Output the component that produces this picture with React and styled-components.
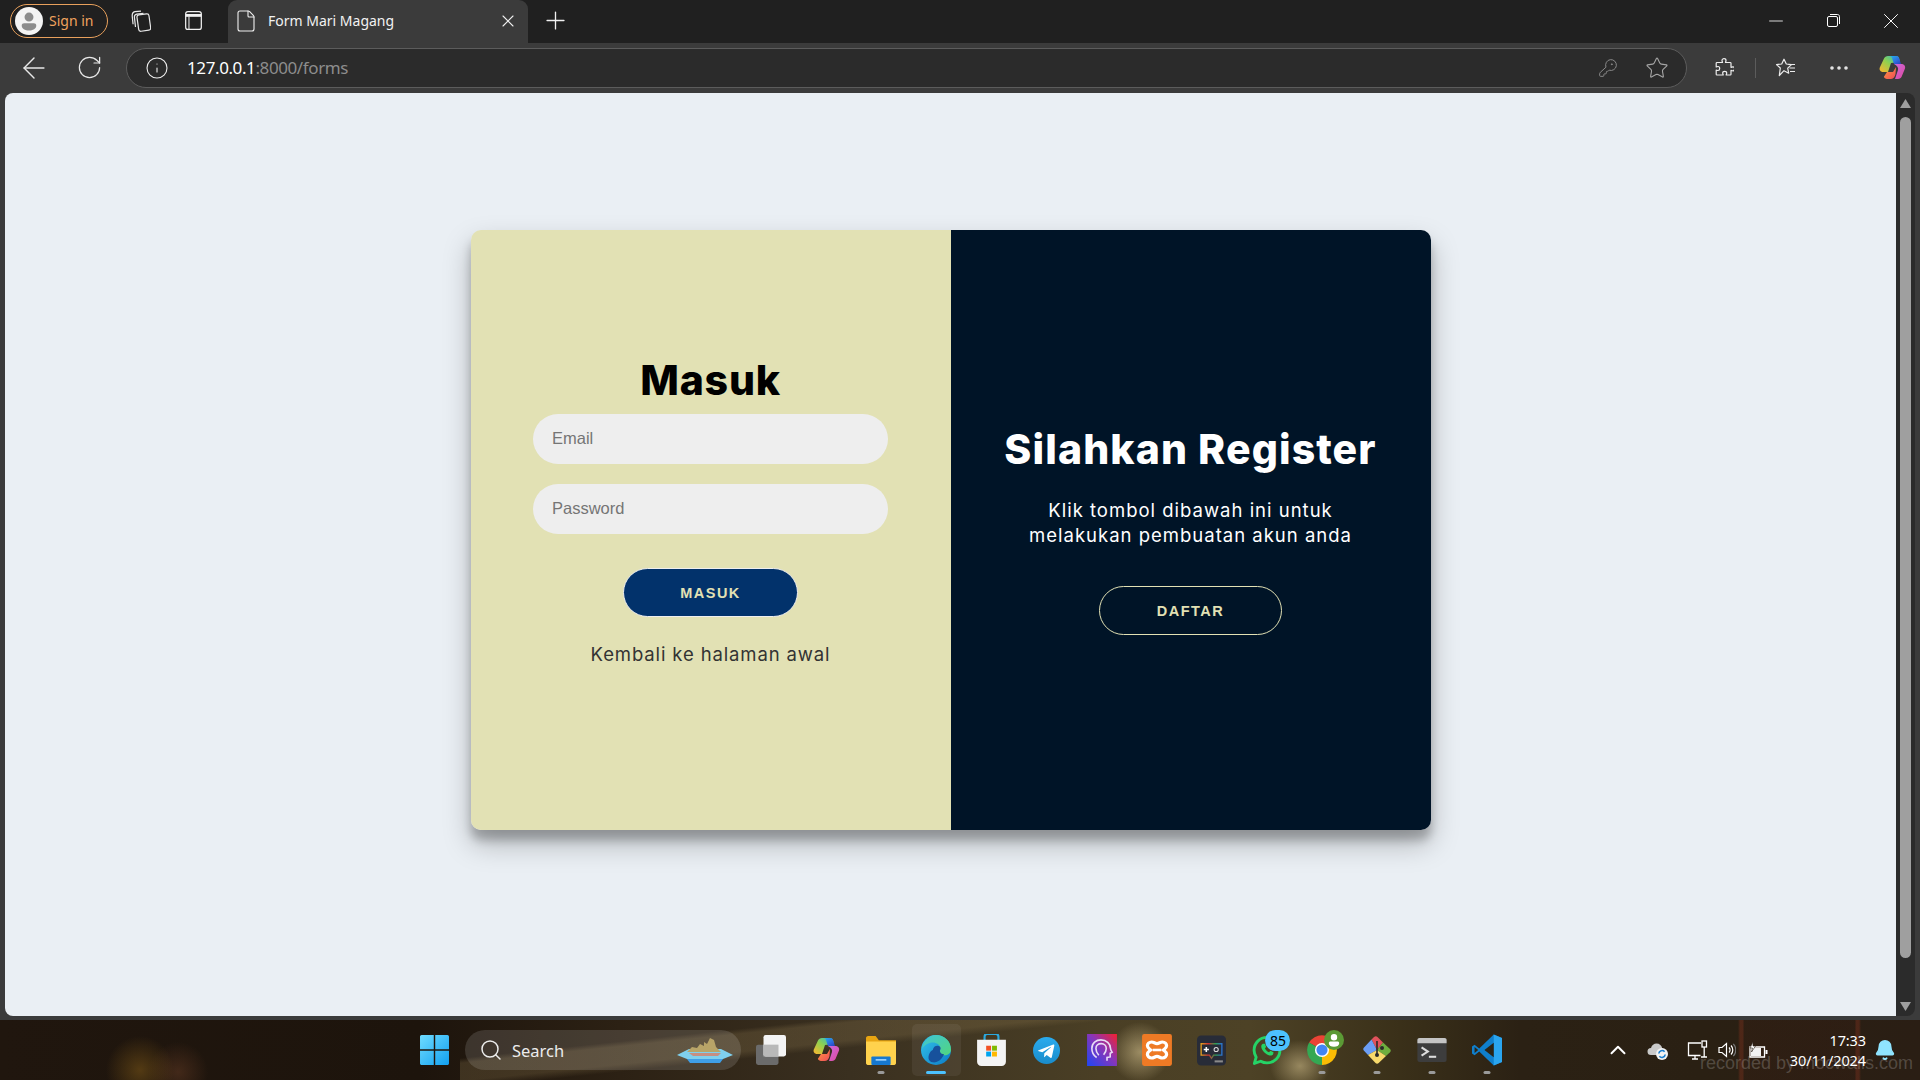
import React from 'react';
import styled, { createGlobalStyle } from 'styled-components';
import {
  ArrowLeft, RotateCw, Info, KeyRound, Star, MoreHorizontal, X, Plus, Minus, Search, ChevronUp, File, Bell,
} from 'lucide-react';

const UI_FONT = `'Noto Sans', 'Open Sans', sans-serif`;
const HEAD_FONT = `'Inter', 'Liberation Sans', sans-serif`;
const FORM_FONT = `'Liberation Sans', Arial, sans-serif`;

const GlobalStyle = createGlobalStyle`
  html, body { margin: 0; padding: 0; height: 100%; background: #3b3b3b; overflow: hidden; }
  * { box-sizing: border-box; }
`;

const Screen = styled.div`
  width: 1920px;
  height: 1080px;
  display: flex;
  flex-direction: column;
  background: #3b3b3b;
  font-family: ${UI_FONT};
`;

/* title bar */
const TitleBar = styled.div`
  height: 43px;
  flex: none;
  display: flex;
  align-items: center;
  background: #202020;
  color: #fff;
  padding-left: 10px;
`;

const SignIn = styled.div`
  width: 98px;
  height: 34px;
  margin-top: -2px;
  flex: none;
  display: flex;
  align-items: center;
  gap: 6px;
  padding-left: 4px;
  border: 1px solid #e8a05c;
  border-radius: 18px;
  color: #f0a35e;
  font-size: 14px;
`;

const Avatar = styled.div`
  width: 28px;
  height: 28px;
  border-radius: 50%;
  background: #f4f4f4;
  flex: none;
  overflow: hidden;
  svg { display: block; }
`;

const TabActions = styled.div`
  display: flex;
  flex: none;
  margin: -2px 9px 0 7px;
`;

const TabAction = styled.div`
  width: 52px;
  height: 30px;
  display: flex;
  align-items: center;
  justify-content: center;
`;

const Tab = styled.div`
  width: 300px;
  height: 43px;
  flex: none;
  display: flex;
  align-items: center;
  padding: 0 10px 2px 6px;
  background: #3b3b3b;
  border-radius: 9px 9px 0 0;
  font-size: 14px;
  color: #f2f2f2;
`;

const TabTitle = styled.span`
  flex: 1;
  margin-left: 10px;
`;

const NewTab = styled.div`
  width: 54px;
  margin-top: -2px;
  flex: none;
  display: flex;
  justify-content: center;
`;

const WindowButtons = styled.div`
  margin-left: auto;
  display: flex;
`;

const WindowButton = styled.div`
  width: 57.5px;
  height: 43px;
  padding-bottom: 2px;
  display: flex;
  align-items: center;
  justify-content: center;
`;

/* toolbar */
const Toolbar = styled.div`
  height: 50px;
  flex: none;
  display: flex;
  align-items: center;
  padding: 0 0 1px 6.5px;
  background: #3b3b3b;
`;

const NavButton = styled.div`
  width: ${(p) => p.$w || 55}px;
  height: 36px;
  flex: none;
  display: flex;
  align-items: center;
  justify-content: center;
  color: ${(p) => p.$color || '#e8e8e8'};
`;

const Address = styled.div`
  width: 1561px;
  height: 40px;
  margin: 0 14px 0 9.5px;
  flex: none;
  display: flex;
  align-items: center;
  background: #2b2b2b;
  border: 1px solid #5c5c5c;
  border-radius: 20px;
  padding-left: 18px;
`;

const Url = styled.div`
  margin-left: 18px;
  flex: 1;
  font-size: 17px;
  letter-spacing: -0.4px;
  color: #fff;
  span { color: #8d8d8d; }
`;

const Separator = styled.div`
  width: 1px;
  height: 20px;
  margin-left: 8px;
  background: #5c5c5c;
  flex: none;
`;

/* page */
const Viewport = styled.div`
  height: 923px;
  flex: none;
  display: flex;
  padding-left: 5px;
`;

const Page = styled.main`
  flex: 1;
  min-width: 0;
  background: #eaeff4;
  border-radius: 8px 0 0 8px;
  padding-top: 137px;
  display: flex;
  justify-content: center;
  align-items: flex-start;
`;

const ScrollTrack = styled.div`
  width: 19px;
  margin-right: 5px;
  flex: none;
  background: #2b2b2b;
  border-radius: 0 8px 8px 0;
  display: flex;
  flex-direction: column;
  align-items: center;
  padding: 6px 0 5px;
`;

const ScrollThumb = styled.div`
  width: 11px;
  height: 841px;
  margin: 9px 0 auto;
  border-radius: 6px;
  background: #9f9f9f;
`;

const Card = styled.section`
  width: 960px;
  height: 600px;
  display: flex;
  border-radius: 10px;
  overflow: hidden;
  box-shadow: 0 14px 28px rgba(0, 0, 0, 0.25), 0 10px 10px rgba(0, 0, 0, 0.22);
`;

const LoginPane = styled.div`
  width: 480px;
  background: #e2e1b4;
  display: flex;
  flex-direction: column;
  align-items: center;
  padding-top: 125px;
`;

const RegisterPane = styled.div`
  width: 480px;
  background: #001427;
  display: flex;
  flex-direction: column;
  align-items: center;
  padding-top: 194px;
`;

const Heading = styled.h1`
  margin: 0;
  font-family: ${HEAD_FONT};
  font-weight: 800;
  font-size: 41px;
  line-height: 50px;
  letter-spacing: ${(p) => p.$spacing}px;
  color: ${(p) => p.$color};
`;

const Field = styled.input`
  display: block;
  width: 355px;
  height: 50px;
  margin-top: ${(p) => p.$top}px;
  padding: 0 19px 2px;
  border: none;
  outline: none;
  border-radius: 25px;
  background: #eeeeee;
  font-family: ${FORM_FONT};
  font-size: 16.5px;
  &::placeholder { color: #757575; opacity: 1; }
`;

const ActionButton = styled.button`
  display: block;
  height: ${(p) => p.$h}px;
  width: ${(p) => p.$w}px;
  border-radius: 25px;
  border: 1px solid ${(p) => p.$border};
  background: ${(p) => p.$bg};
  color: #e2e1b4;
  font-family: ${FORM_FONT};
  font-weight: 700;
  font-size: 14.5px;
  letter-spacing: 1.5px;
  text-transform: uppercase;
  margin-top: ${(p) => p.$top}px;
`;

const BackLink = styled.a`
  margin-top: 25px;
  font-family: ${HEAD_FONT};
  font-size: 18.5px;
  line-height: 24px;
  letter-spacing: 0.87px;
  color: #333;
`;

const Lead = styled.p`
  margin: 24px 0 0;
  font-family: ${HEAD_FONT};
  font-size: 18.5px;
  line-height: 25px;
  letter-spacing: 1px;
  text-align: center;
  color: #fff;
`;

/* taskbar */
const Taskbar = styled.footer`
  margin-top: 4px;
  height: 60px;
  flex: none;
  position: relative;
  display: flex;
  align-items: center;
  color: #fff;
  background:
    linear-gradient(174deg, transparent 0 30%, rgba(135, 115, 75, 0.3) 34% 48%, transparent 54%) 460px 0 / 640px 60px no-repeat,
    radial-gradient(ellipse 34px 34px at 140px 50px, rgba(135, 95, 25, 0.5), transparent),
    radial-gradient(ellipse 30px 30px at 178px 52px, rgba(110, 65, 40, 0.45), transparent),
    radial-gradient(ellipse 30px 30px at 1140px 32px, rgba(235, 215, 160, 0.5), transparent),
    radial-gradient(ellipse 30px 26px at 1300px 46px, rgba(230, 210, 155, 0.5), transparent),
    linear-gradient(90deg, transparent 1738px, rgba(135, 50, 30, 0.38) 1740px 1743px, rgba(60, 28, 18, 0.22) 1744px 1855px, rgba(135, 50, 30, 0.38) 1856px 1859px, transparent 1861px),
    linear-gradient(90deg, #20160e 0, #1d140c 420px, #2c2114 620px, #3a3020 850px, #4a3f25 1100px, #4d4226 1250px, #3a3019 1400px, #2b2114 1520px, #2a2013 1700px, #2a1e14 1920px);
`;

const StartGroup = styled.div`
  display: flex;
  align-items: center;
  padding-left: 420px;
  margin-right: 2.5px;
`;

const SearchPill = styled.div`
  width: 276px;
  height: 40px;
  margin-left: 16px;
  display: flex;
  align-items: center;
  padding: 0 5px 0 14px;
  border-radius: 20px;
  background: rgba(255, 255, 255, 0.13);
  font-size: 16.5px;
  color: #ececec;
  span { margin-left: 9px; margin-right: auto; }
`;

const AppSlot = styled.div`
  width: 55.1px;
  height: 60px;
  flex: none;
  position: relative;
  display: flex;
  align-items: center;
  justify-content: center;
  &::before {
    content: ${(p) => (p.$active ? "''" : 'none')};
    position: absolute;
    inset: 4px 3px;
    border-radius: 5px;
    background: rgba(255, 255, 255, 0.06);
  }
  &::after {
    content: ${(p) => (p.$running ? "''" : 'none')};
    position: absolute;
    bottom: 6px;
    left: 50%;
    transform: translateX(-50%);
    width: ${(p) => (p.$active ? 20 : 7)}px;
    height: 3px;
    border-radius: 2px;
    background: ${(p) => (p.$active ? '#4cc2ff' : '#9a9a9a')};
  }
  svg { position: relative; }
`;

const CountBadge = styled.div`
  position: absolute;
  top: 10px;
  right: 4px;
  width: 25px;
  height: 21px;
  border-radius: 11px;
  background: #4cc2ff;
  color: #000;
  font-size: 14px;
  line-height: 21px;
  text-align: center;
`;

const ProfileBubble = styled.div`
  position: absolute;
  top: 10px;
  right: 6px;
  width: 20px;
  height: 20px;
  border-radius: 50%;
  background: #5b9a35;
  overflow: hidden;
  svg { display: block; }
`;

const Tray = styled.div`
  position: absolute;
  right: 0;
  top: 0;
  height: 60px;
  display: flex;
  align-items: center;
  padding-right: 24px;
`;

const TrayIcon = styled.div`
  width: ${(p) => p.$w}px;
  display: flex;
  justify-content: center;
  flex: none;
`;

const Clock = styled.div`
  position: relative;
  margin: 0 8px 0 15px;
  font-size: 14.5px;
  line-height: 20px;
  text-align: right;
  letter-spacing: -0.1px;
`;

const Watermark = styled.div`
  position: absolute;
  right: 7px;
  bottom: 7px;
  font-family: ${FORM_FONT};
  font-size: 18px;
  line-height: 20px;
  white-space: nowrap;
  color: rgba(255, 255, 255, 0.2);
`;

const CopilotMark = ({ size = 28 }) => (
  <svg width={size} height={size} viewBox="0 0 28 28">
    <defs>
      <linearGradient id="copA" x1="0" y1="0" x2="1" y2="1">
        <stop offset="0" stopColor="#27b4e8" />
        <stop offset="0.55" stopColor="#2d6fe0" />
        <stop offset="1" stopColor="#2a3fc0" />
      </linearGradient>
      <linearGradient id="copB" x1="0" y1="1" x2="1" y2="0">
        <stop offset="0" stopColor="#ffb52e" />
        <stop offset="0.5" stopColor="#8fd14f" />
        <stop offset="1" stopColor="#23b6d6" />
      </linearGradient>
      <linearGradient id="copC" x1="0" y1="0" x2="1" y2="1">
        <stop offset="0" stopColor="#c86be0" />
        <stop offset="1" stopColor="#e0489c" />
      </linearGradient>
      <linearGradient id="copD" x1="0" y1="0" x2="1" y2="1">
        <stop offset="0" stopColor="#ff9a3c" />
        <stop offset="1" stopColor="#ee4a5a" />
      </linearGradient>
    </defs>
    <path d="M10 2h8c1.600 0 2.600.8 3 2l1 4-9 1-3 9H5C2.500 18 1 15.800 1.800 13.500L6 4.500C6.800 3 8 2 10 2z" fill="url(#copB)" />
    <path d="M12 2h6c1.600 0 2.700.9 3.100 2.200L23 10h-7l-2-6c-.3-1-1-1.700-2-2z" fill="url(#copA)" />
    <path d="M16 10h7c3 0 4.800 2 4 4.500l-3.300 8c-.6 1.500-1.900 2.500-3.700 2.500h-3l3-9c.7-2.500-.9-4.500-4-6z" fill="url(#copC)" />
    <path d="M9 18h6l3-5-.5 7c-.5 3-2.500 5-5 5H9c-1.500 0-2.700-.9-3.100-2.200z" fill="url(#copD)" />
  </svg>
);

const WindowsLogo = () => (
  <svg width="29" height="30" viewBox="0 0 28 29">
    <defs>
      <linearGradient id="winA" x1="0" y1="0" x2="1" y2="1">
        <stop offset="0" stopColor="#6fdcff" />
        <stop offset="1" stopColor="#12a0f0" />
      </linearGradient>
    </defs>
    <path d="M1.500 0H13.300V13.800H0V1.500C0 .7.700 0 1.500 0zM14.700 0H26.500C27.300 0 28 .7 28 1.500V13.800H14.700zM0 15.200H13.300V29H1.500C.7 29 0 28.300 0 27.500zM14.700 15.200H28V27.500c0 .8-.7 1.500-1.500 1.500H14.700z" fill="url(#winA)" />
  </svg>
);

const TaskViewIcon = () => (
  <svg width="30" height="30" viewBox="0 0 28 28">
    <rect x="0" y="9" width="21" height="19" rx="2" fill="#6b6b6b" />
    <rect x="7" y="0" width="21" height="20" rx="2" fill="#f4f4f4" />
    <rect x="7" y="9" width="14" height="11" fill="#b9b9b9" />
  </svg>
);

const FolderIcon = () => (
  <svg width="30" height="29" viewBox="0 0 28 27">
    <path d="M0 2c0-1 .8-2 2-2h7l3 4h16v3H0z" fill="#e8a512" />
    <path d="M0 5h28v20.500c0 .8-.7 1.500-1.500 1.500h-25C.7 27 0 26.300 0 25.500z" fill="#ffd24d" />
    <rect x="5" y="19" width="18" height="8" rx="1" fill="#1678d0" />
    <rect x="9" y="21.500" width="10" height="1.500" fill="#9fd4ff" />
  </svg>
);

const EdgeIcon = () => (
  <svg width="30" height="30" viewBox="0 0 28 28">
    <defs>
      <linearGradient id="edgeA" x1="0" y1="0" x2="1" y2="1">
        <stop offset="0" stopColor="#34c3e8" />
        <stop offset="1" stopColor="#0c7cc8" />
      </linearGradient>
      <linearGradient id="edgeB" x1="0" y1="0" x2="1" y2="1">
        <stop offset="0" stopColor="#3fc4d8" />
        <stop offset="1" stopColor="#52d67c" />
      </linearGradient>
    </defs>
    <circle cx="14" cy="14" r="14" fill="url(#edgeA)" />
    <path d="M14 0c8 0 14 6 14 13.500 0 3.500-2.800 5.500-6.500 5.500-3 0-5-1-5-2.500 0-1 1.500-1.200 1.500-3.500C18 9 14.500 7 11 7 7 7 3 9.500 1 13 2 6 7.500 0 14 0z" fill="url(#edgeB)" />
    <path d="M11 14c.5-3 3-4.500 5.500-3.800 1.800.6 2.200 1.800 1.500 3.300-1 2 .2 4 3.500 4.500-2 5-6 8-10.500 7.500C7 25 6 21 8 17c1-2 2.700-3 3-3z" fill="#17519c" />
  </svg>
);

const StoreIcon = () => (
  <svg width="29" height="32" viewBox="0 0 27 30">
    <path d="M7 6V2.500C7 1 8 0 9.500 0h8C19 0 20 1 20 2.500V6" fill="none" stroke="#2aa9e0" strokeWidth="2" />
    <path d="M0 5.500h27V26c0 2.200-1.800 4-4 4H4c-2.200 0-4-1.800-4-4z" fill="#f4f4f4" />
    <rect x="8.500" y="11" width="4.600" height="4.600" fill="#f25022" />
    <rect x="14" y="11" width="4.600" height="4.600" fill="#7fba00" />
    <rect x="8.500" y="16.500" width="4.600" height="4.600" fill="#00a4ef" />
    <rect x="14" y="16.500" width="4.600" height="4.600" fill="#ffb900" />
  </svg>
);

const TelegramIcon = () => (
  <svg width="27" height="27" viewBox="0 0 26 26">
    <defs>
      <linearGradient id="tgA" x1="0" y1="0" x2="0" y2="1">
        <stop offset="0" stopColor="#2aabee" />
        <stop offset="1" stopColor="#1a8ccb" />
      </linearGradient>
    </defs>
    <circle cx="13" cy="13" r="13" fill="url(#tgA)" />
    <path d="M5.500 12.800 19.500 7.300c.7-.2 1.200.2 1 1.100l-2.400 11c-.2.8-.7 1-1.300.6l-3.600-2.700-1.800 1.700c-.3.3-.5.4-.8.4l.3-3.700 6.400-5.800c.3-.3 0-.4-.4-.2l-7.900 5-3.400-1c-.8-.3-.8-.8.1-1.100z" fill="#fff" />
  </svg>
);

const ArcIcon = () => (
  <svg width="30" height="32" viewBox="0 0 28 30">
    <defs>
      <linearGradient id="arcA" x1="0" y1="1" x2="1" y2="0">
        <stop offset="0" stopColor="#1e46f5" />
        <stop offset="0.55" stopColor="#8a35b8" />
        <stop offset="1" stopColor="#f5202e" />
      </linearGradient>
    </defs>
    <rect width="28" height="30" fill="url(#arcA)" />
    <path d="M9 22c-3-2-4.500-5-4.500-8.500C4.500 8.500 8.500 5.500 13 5.500c5 0 9 3.500 9 8 0 1.500.8 2.500 1.500 3.500l-1.800 1v3.500l-3 .5V25" fill="none" stroke="#e9dcf5" strokeWidth="1.500" />
    <path d="M11 20c-1.500-1.800-2.700-3.800-2.700-6.500 0-2.800 2.200-4.500 5-4.500s4.700 2 4.700 4.500c0 2.500-1.300 4.500-2.500 6" fill="none" stroke="#e9dcf5" strokeWidth="1.500" />
  </svg>
);

const XamppIcon = () => (
  <svg width="30" height="32" viewBox="0 0 28 30">
    <rect width="28" height="30" rx="2" fill="#ee7a25" />
    <path d="M9 7.500c2 0 3 1.500 5 1.500s3-1.500 5-1.500c2.500 0 4 1.600 4 3.500 0 2-1.800 3-3 4 1.200 1 3 2 3 4 0 1.900-1.500 3.500-4 3.500-2 0-3-1.500-5-1.500s-3 1.500-5 1.500c-2.500 0-4-1.600-4-3.500 0-2 1.800-3 3-4-1.200-1-3-2-3-4 0-1.900 1.500-3.500 4-3.500z" fill="none" stroke="#fff" strokeWidth="3" />
    <rect x="10" y="13.800" width="8" height="2.400" fill="#fff" />
  </svg>
);

const MsiIcon = () => (
  <svg width="29" height="31" viewBox="0 0 28 29">
    <defs>
      <linearGradient id="msiA" x1="0" y1="0" x2="1" y2="0">
        <stop offset="0" stopColor="#e0a020" />
        <stop offset="0.35" stopColor="#d03030" />
        <stop offset="0.7" stopColor="#30a050" />
        <stop offset="1" stopColor="#2a70d0" />
      </linearGradient>
    </defs>
    <rect width="28" height="29" rx="4" fill="#282c38" />
    <path d="M4 8h20v11H16l-2 3-2-3H4z" fill="none" stroke="url(#msiA)" strokeWidth="1.300" />
    <path d="M9 11v5M6.500 13.500h5" stroke="#fff" strokeWidth="1.500" />
    <circle cx="18.500" cy="13.500" r="2" fill="none" stroke="#ddd" />
    <rect x="17" y="24" width="8" height="2" fill="#8a8a8a" />
  </svg>
);

const WhatsappIcon = () => (
  <svg width="30" height="31" viewBox="0 0 29 30">
    <path d="M2.300 27.500 4 21.500C2.800 19.400 2 17.200 2 14.700 2 7.800 7.600 2.300 14.500 2.300S27 7.800 27 14.700 21.400 27 14.500 27c-2.200 0-4.300-.6-6.100-1.600z" fill="none" stroke="#25d366" strokeWidth="2.800" strokeLinejoin="round" />
    <path d="M10.500 8.500c-1 .5-1.800 1.800-1.500 3.300.5 3 4.200 7 8 8 1.500.4 3-.3 3.500-1.500l.3-1.500-3-1.500-1.300 1.500c-1.500-.5-3.500-2.500-4-4l1.200-1.300-1.300-3z" fill="#25d366" />
  </svg>
);

const ChromeIcon = () => (
  <svg width="30" height="30" viewBox="0 0 29 29">
    <path d="M14.500 14.500 2 7.300A14.500 14.500 0 0 1 27 7.300z" fill="#ea4335" />
    <path d="M14.500 14.500 27 7.300a14.500 14.500 0 0 1-12.500 21.700z" fill="#fbbc04" />
    <path d="M14.500 14.500V29A14.500 14.500 0 0 1 2 7.300z" fill="#34a853" />
    <circle cx="14.500" cy="14.500" r="6.800" fill="#fff" />
    <circle cx="14.500" cy="14.500" r="5.400" fill="#4285f4" />
  </svg>
);

const GitIcon = () => (
  <svg width="30" height="30" viewBox="0 0 30 30">
    <path d="M15 15 9.500 4.500 12 2c1.200-1 2.500-1 3.500 0L21 7.500z" fill="#e0525c" />
    <path d="M15 15 21 7.500 28 14c1 1 1 2.200 0 3.200L24 21z" fill="#6fae3f" />
    <path d="M15 15 9.500 4.500 2 12.500c-1 1-1 2.200 0 3.200L6 20z" fill="#6b9ef5" />
    <path d="M15 15 6 20l7.500 8c1 1 2.200 1 3.200 0L24 21z" fill="#f7d96b" />
    <path d="M15 6v13" stroke="#2a2a2a" strokeWidth="1.600" />
    <circle cx="15" cy="20" r="2" fill="#2a2a2a" />
    <circle cx="20" cy="13" r="2" fill="#2a2a2a" />
  </svg>
);

const TerminalIcon = () => (
  <svg width="30" height="24" viewBox="0 0 28 23">
    <rect width="28" height="23" rx="2" fill="#3d3d3d" />
    <path d="M0 2c0-1.100.9-2 2-2h24c1.100 0 2 .9 2 2v3H0z" fill="#c4c4c4" />
    <path d="M4 9l6 4-6 4" fill="none" stroke="#dcdcdc" strokeWidth="2" />
    <path d="M11 18h7" stroke="#dcdcdc" strokeWidth="2" />
  </svg>
);

const VsCodeIcon = () => (
  <svg width="30" height="32" viewBox="0 0 29 30">
    <path d="M21 0 29 3.500V26.500L21 30 7 16.500 2.500 20 0 18.500V11.500L2.500 10 7 13.500z" fill="#0f7fcc" />
    <path d="M21 0 29 3.500V26.500L21 30z" fill="#2aa5ef" />
    <path d="M21 8 12 15l9 7z" fill="#2c2415" />
    <path d="M2.500 12 6 15l-3.500 3z" fill="#2c2415" />
  </svg>
);

const IslandArt = () => (
  <svg width="62" height="30" viewBox="0 0 60 30">
    <path d="M2 20 14 14 46 14 58 20 48 24H12z" fill="#7fd0ee" />
    <path d="M12 24h36l-3 4H15z" fill="#3f9fe8" />
    <path d="M12 17l5-5 5 1 3-4 4 2V7l3 2 3-6 4 2 2 7 5 5z" fill="#b8a468" />
    <path d="M14 18h32l-3 3H18z" fill="#c78f82" />
  </svg>
);

const CloudSync = () => (
  <svg width="21" height="20" viewBox="0 0 21 20">
    <path d="M4 15a3.500 3.500 0 0 1 0-7c.8-3 3-4.500 5.500-4.500 3 0 5.300 2 5.800 5 2.500.2 3.700 2 3.700 3.500H12v3z" fill="#c9c9c9" />
    <circle cx="15" cy="14" r="6" fill="#f2f2f2" />
    <path d="M11.800 13.500a3.300 3.300 0 0 1 5.800-1.800M18.200 14.500a3.300 3.300 0 0 1-5.800 1.800" fill="none" stroke="#1a7fd0" strokeWidth="1.600" />
  </svg>
);

const NetworkIcon = () => (
  <svg width="21" height="21" viewBox="0 0 21 21" fill="none" stroke="#fff" strokeWidth="1.300">
    <path d="M14 3H1.500v12.500h12" />
    <path d="M5 19h6M8 15.500V19" />
    <rect x="15" y="1" width="4.500" height="6" />
    <path d="M17.200 7v10M14 17h6" />
  </svg>
);

const SpeakerIcon = () => (
  <svg width="18" height="16" viewBox="0 0 18 16" fill="none" stroke="#fff" strokeWidth="1.200">
    <path d="M1 5.500h3L8.500 1.500v13L4 10.500H1z" />
    <path d="M11 5.500a3.500 3.500 0 0 1 0 5M13 3.500a6.500 6.500 0 0 1 0 9" />
    <path d="M15.300 1.800a9 9 0 0 1 0 12.400" stroke="#777" />
  </svg>
);

const BatteryIcon = () => (
  <svg width="20" height="16" viewBox="0 0 20 16">
    <path d="M2 5h14.500v10H2z" fill="none" stroke="#fff" strokeWidth="1.300" />
    <rect x="3" y="6" width="10" height="8" fill="#f2f2f2" />
    <rect x="17.500" y="8" width="2" height="4" fill="#fff" />
    <path d="M5 0 2 6h2.500L3.500 10 7.500 4H5z" fill="#fff" stroke="#2a2016" strokeWidth="0.600" />
  </svg>
);

const CollectionsIcon = () => (
  <svg width="20" height="22" viewBox="0 0 18 20" fill="none" stroke="#e8e8e8" strokeWidth="1.100">
    <rect x="6" y="4" width="11" height="15" rx="2" transform="rotate(-8 11 11)" />
    <path d="M4 15.500 3 6.500c-.1-1.500.8-2.600 2.200-2.800l6-.7" />
    <path d="M1.800 13 1 5.500C.9 3 2 1.800 3.500 1.500L9 1" />
  </svg>
);

const TabsIcon = () => (
  <svg width="17" height="21" viewBox="0 0 15 17" fill="none" stroke="#f0f0f0" strokeWidth="1.100">
    <rect x="0.600" y="0.600" width="13.800" height="15.800" rx="2" />
    <path d="M0.600 4h13.800" strokeWidth="2.500" />
    <path d="M3.500 5v11" strokeWidth="0.900" />
  </svg>
);

const RestoreIcon = () => (
  <svg width="13" height="13" viewBox="0 0 13 13" fill="none" stroke="#fff" strokeWidth="1">
    <rect x="0.500" y="2.500" width="10" height="10" rx="1.500" />
    <path d="M3 .5h7.500c1.100 0 2 .9 2 2V10" />
  </svg>
);

const PuzzleIcon = () => (
  <svg width="20" height="20" viewBox="0 0 20 20" fill="none" stroke="#ededed" strokeWidth="1.200" strokeLinejoin="round">
    <path d="M8 2.500C8 1.200 9 .7 10 .7s2 .5 2 1.800c0 1-.5 1.400-.5 2h4.700c.5 0 .8.3.8.8v4c.5 0 1-.5 2-.5 1.200 0 1.600 1 1.600 2s-.4 2-1.600 2c-1 0-1.500-.5-2-.5v3.900c0 .5-.3.800-.8.800h-4c0-.5.5-1 .5-2 0-1.200-1-1.700-2-1.700s-2 .5-2 1.700c0 1 .5 1.500.5 2H3c-.5 0-.8-.3-.8-.8v-4.200c.5 0 1 .5 1.800.5 1.200 0 1.700-1 1.700-2s-.5-2-1.700-2c-.8 0-1.300.5-1.800.5V5.300c0-.5.3-.8.8-.8h5.500C8.500 4 8 3.500 8 2.500z" />
  </svg>
);

const FavListIcon = () => (
  <svg width="21" height="19" viewBox="0 0 21 19" fill="none" stroke="#ededed" strokeWidth="1.200" strokeLinejoin="round">
    <path d="M9 1.200 11.300 6l5.200.6-3.800 3.500 1 5.100L9 12.700 4.300 17.500 5.300 10 1.500 6.600 6.700 6z" />
    <path d="M13.500 6.500H20M14.500 10H20M15 13.500h5" />
  </svg>
);

const AVATAR_PATH = 'M12.500 5a4 4 0 1 1 0 8 4 4 0 0 1 0-8zM6 16.500c0-1.200 1-2 2.200-2h8.600c1.200 0 2.200.8 2.200 2 0 3-3 4.500-6.500 4.500S6 19.500 6 16.500z';

const APPS = [
  { key: 'taskview', icon: <TaskViewIcon /> },
  { key: 'copilot', icon: <CopilotMark /> },
  { key: 'explorer', icon: <FolderIcon />, running: true },
  { key: 'edge', icon: <EdgeIcon />, running: true, active: true },
  { key: 'store', icon: <StoreIcon /> },
  { key: 'telegram', icon: <TelegramIcon /> },
  { key: 'arc', icon: <ArcIcon /> },
  { key: 'xampp', icon: <XamppIcon /> },
  { key: 'msi', icon: <MsiIcon /> },
  { key: 'whatsapp', icon: <WhatsappIcon />, extra: <CountBadge>85</CountBadge> },
  {
    key: 'chrome',
    icon: <ChromeIcon />,
    running: true,
    extra: (
      <ProfileBubble>
        <svg width="20" height="20" viewBox="0 0 25 25"><path d={AVATAR_PATH} fill="#fff" /></svg>
      </ProfileBubble>
    ),
  },
  { key: 'git', icon: <GitIcon />, running: true },
  { key: 'terminal', icon: <TerminalIcon />, running: true },
  { key: 'vscode', icon: <VsCodeIcon />, running: true },
];

export default function App() {
  return (
    <Screen>
      <GlobalStyle />
      <TitleBar>
        <SignIn>
          <Avatar>
            <svg width="28" height="28" viewBox="0 0 25 25"><path d={AVATAR_PATH} fill="#8c8c8c" /></svg>
          </Avatar>
          Sign in
        </SignIn>
        <TabActions>
          <TabAction><CollectionsIcon /></TabAction>
          <TabAction><TabsIcon /></TabAction>
        </TabActions>
        <Tab>
          <File size={24} strokeWidth={1.1} color="#f0f0f0" />
          <TabTitle>Form Mari Magang</TabTitle>
          <X size={20} strokeWidth={1.3} color="#f0f0f0" />
        </Tab>
        <NewTab><Plus size={29} strokeWidth={1.1} color="#f0f0f0" /></NewTab>
        <WindowButtons>
          <WindowButton><Minus size={22} strokeWidth={0.9} color="#fff" /></WindowButton>
          <WindowButton><RestoreIcon /></WindowButton>
          <WindowButton><X size={26} strokeWidth={0.9} color="#fff" /></WindowButton>
        </WindowButtons>
      </TitleBar>

      <Toolbar>
        <NavButton><ArrowLeft size={34} strokeWidth={1} /></NavButton>
        <NavButton><RotateCw size={27} strokeWidth={1.1} /></NavButton>
        <Address>
          <Info size={24} strokeWidth={1.1} color="#eee" />
          <Url>127.0.0.1<span>:8000/forms</span></Url>
          <NavButton $w={40} $color="#8a8a8a"><KeyRound size={20} strokeWidth={1.2} /></NavButton>
          <NavButton $w={58} $color="#a5a5a5"><Star size={24} strokeWidth={1.1} /></NavButton>
        </Address>
        <NavButton $w={46}><PuzzleIcon /></NavButton>
        <Separator />
        <NavButton $w={58}><FavListIcon /></NavButton>
        <NavButton $w={50}><MoreHorizontal size={24} strokeWidth={1.6} /></NavButton>
        <NavButton $w={56}><CopilotMark /></NavButton>
      </Toolbar>

      <Viewport>
        <Page>
          <Card>
            <LoginPane>
              <Heading $spacing={0.8} $color="#000">Masuk</Heading>
              <Field $top={9} placeholder="Email" />
              <Field $top={20} placeholder="Password" />
              <ActionButton $top={34} $w={175} $h={49} $bg="#02326b" $border="#eeeeee">Masuk</ActionButton>
              <BackLink>Kembali ke halaman awal</BackLink>
            </LoginPane>
            <RegisterPane>
              <Heading $spacing={1.1} $color="#fff">Silahkan Register</Heading>
              <Lead>Klik tombol dibawah ini untuk<br />melakukan pembuatan akun anda</Lead>
              <ActionButton $top={38} $w={183} $h={49} $bg="transparent" $border="#e2e1b4">Daftar</ActionButton>
            </RegisterPane>
          </Card>
        </Page>
        <ScrollTrack>
          <svg width="11" height="9" viewBox="0 0 11 9"><path d="M5.500 0 11 9H0z" fill="#9f9f9f" /></svg>
          <ScrollThumb />
          <svg width="11" height="9" viewBox="0 0 11 9"><path d="M0 0h11L5.500 9z" fill="#9f9f9f" /></svg>
        </ScrollTrack>
      </Viewport>

      <Taskbar>
        <StartGroup>
          <WindowsLogo />
          <SearchPill>
            <Search size={24} strokeWidth={1.5} color="#ececec" />
            <span>Search</span>
            <IslandArt />
          </SearchPill>
        </StartGroup>
        {APPS.map((app) => (
          <AppSlot key={app.key} $running={app.running} $active={app.active}>
            {app.icon}
            {app.extra}
          </AppSlot>
        ))}
        <Tray>
          <Watermark>recorded by mocwalls.com</Watermark>
          <TrayIcon $w={30}><ChevronUp size={26} strokeWidth={1.8} /></TrayIcon>
          <TrayIcon $w={50}><CloudSync /></TrayIcon>
          <TrayIcon $w={30}><NetworkIcon /></TrayIcon>
          <TrayIcon $w={28}><SpeakerIcon /></TrayIcon>
          <TrayIcon $w={34}><BatteryIcon /></TrayIcon>
          <Clock>17:33<br />30/11/2024</Clock>
          <Bell size={22} fill="#8fe4ff" color="#8fe4ff" />
        </Tray>
      </Taskbar>
    </Screen>
  );
}
